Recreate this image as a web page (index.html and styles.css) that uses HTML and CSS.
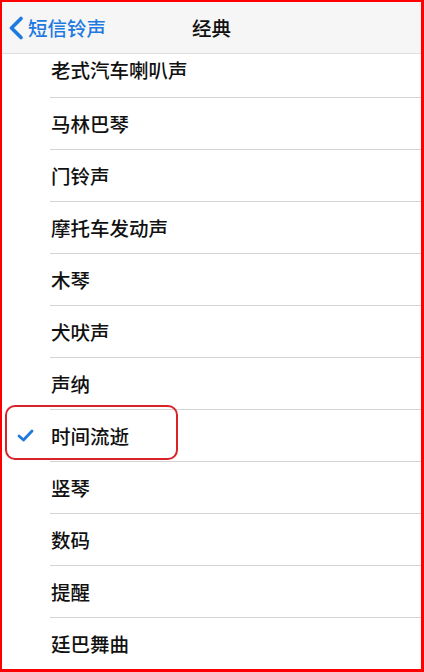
FILE: index.html
```html
<!DOCTYPE html>
<html>
<head>
    <title>经典</title>
    <link rel="stylesheet" href="styles.css">
</head>
<body>
    <div class="frame">
        <div class="navbar">
            <div class="back">
                <svg class="chevron" width="16" height="24" viewBox="0 0 16 24">
                    <path d="M13 2.5 L3.5 12 L13 21.5" fill="none" stroke="#1f7ae0" stroke-width="3.6" stroke-linecap="round" stroke-linejoin="round"/>
                </svg>
                <span>短信铃声</span>
            </div>
            <div class="title">经典</div>
        </div>

        <div class="list">
            <div class="row first"><span class="label">老式汽车喇叭声</span></div>
            <div class="row"><span class="label">马林巴琴</span></div>
            <div class="row"><span class="label">门铃声</span></div>
            <div class="row"><span class="label">摩托车发动声</span></div>
            <div class="row"><span class="label">木琴</span></div>
            <div class="row"><span class="label">犬吠声</span></div>
            <div class="row"><span class="label">声纳</span></div>
            <div class="row selected">
                <svg class="check" width="17" height="13" viewBox="0 0 17 13">
                    <path d="M2 7 L6.5 11 L15 2" fill="none" stroke="#1f7ae0" stroke-width="2.8" stroke-linecap="round" stroke-linejoin="round"/>
                </svg>
                <span class="label">时间流逝</span>
                <div class="highlight"></div>
            </div>
            <div class="row"><span class="label">竖琴</span></div>
            <div class="row"><span class="label">数码</span></div>
            <div class="row"><span class="label">提醒</span></div>
            <div class="row"><span class="label">廷巴舞曲</span></div>
        </div>
    </div>
</body>
</html>
```

FILE: styles.css
```css
html, body {
    margin: 0;
    padding: 0;
}
body {
    font-family: "Noto Sans CJK SC", "Noto Sans", sans-serif;
    color: #111;
    background: #fff;
}
.frame {
    width: 424px;
    height: 672px;
    box-sizing: border-box;
    border-style: solid;
    border-color: #ff0000;
    border-width: 2px 3px 3px 2px;
    overflow: hidden;
}
.navbar {
    height: 51px;
    background: #f7f6f6;
    border-bottom: 1px solid #dedede;
    display: flex;
    align-items: center;
    position: relative;
}
.back {
    display: flex;
    align-items: center;
    gap: 4px;
    padding-left: 6px;
    color: #1f7ae0;
    font-size: 19.5px;
    font-weight: 500;
}
.chevron {
    display: block;
}
.title {
    position: absolute;
    left: 0;
    right: 0;
    text-align: center;
    font-size: 19.5px;
    font-weight: 500;
    pointer-events: none;
}
.list {
    display: flex;
    flex-direction: column;
}
.row {
    height: 51px;
    margin-left: 48px;
    border-bottom: 1px solid #d4d4d4;
    display: flex;
    align-items: center;
    position: relative;
}
.row.first {
    height: 44px;
    align-items: flex-start;
    padding-top: 2px;
    box-sizing: border-box;
}
.label {
    font-size: 19.5px;
    font-weight: 500;
    line-height: 28px;
    padding-left: 1px;
}
.check {
    position: absolute;
    left: -33px;
    top: 19px;
}
.highlight {
    position: absolute;
    left: -45px;
    top: -5px;
    width: 173px;
    height: 55px;
    box-sizing: border-box;
    border: 2px solid #d8232a;
    border-radius: 10px;
}
```
